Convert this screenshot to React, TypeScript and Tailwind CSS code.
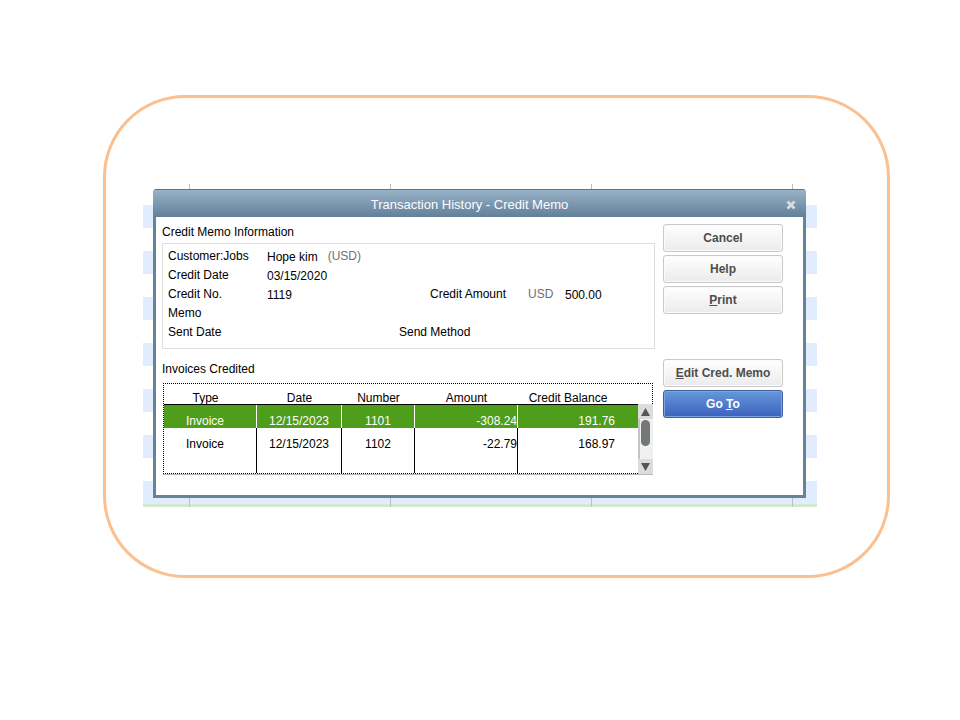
import clsx from "clsx";
import type { ReactNode } from "react";

const invoices = [
  { type: "Invoice", date: "12/15/2023", number: "1101", amount: "-308.24", balance: "191.76" },
  { type: "Invoice", date: "12/15/2023", number: "1102", amount: "-22.79", balance: "168.97" },
];

function DialogButton({ children, primary = false }: { children: ReactNode; primary?: boolean }) {
  return (
    <button
      type="button"
      className={clsx(
        "h-7 w-full rounded-[3px] border text-xs font-bold",
        primary
          ? "border-[#3f5f9f] bg-linear-to-b from-[#6797da] to-[#3c62be] text-white shadow-[inset_0_0_0_1px_#7ba3e0]"
          : "border-[#c9c9c9] bg-linear-to-b from-white to-[#ebebeb] text-[#4d4d4d] shadow-[inset_0_0_0_1px_#fafafa]",
      )}
    >
      {children}
    </button>
  );
}

function Key({ children }: { children: string }) {
  return <span className="underline decoration-1 underline-offset-1">{children}</span>;
}

function MemoInformation() {
  return (
    <section>
      <h2 className="leading-4">Credit Memo Information</h2>
      <dl className="mt-[3px] grid h-[106px] auto-rows-[19px] grid-cols-[99px_132px_31px_98px_37px_1fr] content-start border border-[#dedede] pt-[3px] pl-[5px] leading-[19px]">
        <dt className="col-start-1">Customer:Jobs</dt>
        <dd className="flex gap-[10px]">
          <span className="pt-px">Hope kim</span>
          <span className="text-[#707070]">(USD)</span>
        </dd>
        <dt className="col-start-1">Credit Date</dt>
        <dd className="pt-px">03/15/2020</dd>
        <dt className="col-start-1">Credit No.</dt>
        <dd className="pt-px">1119</dd>
        <dt className="col-start-4">Credit Amount</dt>
        <dd className="text-[#707070]">USD</dd>
        <dd className="pt-px">500.00</dd>
        <dt className="col-start-1">Memo</dt>
        <dt className="col-start-1">Sent Date</dt>
        <dt className="col-span-2 col-start-3">Send Method</dt>
      </dl>
    </section>
  );
}

function ScrollBar() {
  return (
    <div className="flex flex-1 flex-col border-b border-[#b8b8b8] bg-[#dcdcdc]">
      <button type="button" aria-label="Scroll up" className="flex h-[15px] items-center justify-center">
        <svg viewBox="0 0 9 8" className="h-2 w-[9px]" aria-hidden>
          <path d="M4.5 0 9 8H0z" fill="#555" />
        </svg>
      </button>
      <div className="flex-1 border-l-2 border-[#c4c4c4] bg-[#f0f0f0] pt-px pl-px">
        <div className="h-[26px] w-[9px] rounded-full bg-[#737877]" />
      </div>
      <button type="button" aria-label="Scroll down" className="flex h-[15px] items-center justify-center">
        <svg viewBox="0 0 9 8" className="h-2 w-[9px]" aria-hidden>
          <path d="M0 0h9L4.5 8z" fill="#555" />
        </svg>
      </button>
    </div>
  );
}

function InvoicesCredited() {
  return (
    <section className="mt-3">
      <h2 id="invoices-credited" className="leading-4">
        Invoices Credited
      </h2>
      <div className="mt-[6px] mr-[2px] ml-px grid grid-cols-[1fr_15px]">
        <div className="border-b border-[#b8b8b8]">
          <div className="border border-r-0 border-dotted border-black">
            <table
              aria-labelledby="invoices-credited"
              className="w-full table-fixed border-separate border-spacing-0 text-center leading-[14px] [&_td]:p-0 [&_td]:align-bottom [&_th]:border-b [&_th]:border-black [&_th]:p-0 [&_th]:align-bottom [&_th]:leading-3 [&_th]:font-normal"
            >
              <colgroup>
                <col className="w-[93px]" />
                <col className="w-[85px]" />
                <col className="w-[73px]" />
                <col className="w-[103px]" />
                <col />
              </colgroup>
              <thead>
                <tr className="h-[21px]">
                  <th><div className="pr-[10px]">Type</div></th>
                  <th>Date</th>
                  <th>Number</th>
                  <th>Amount</th>
                  <th><div className="pr-[20px]">Credit Balance</div></th>
                </tr>
              </thead>
              <tbody>
                {invoices.map((invoice, i) => {
                  const line = i === 0 ? "border-r border-white" : "border-r border-black";
                  return (
                    <tr key={invoice.number} className={clsx("h-[23px]", i === 0 && "bg-[#4e9d1b] text-white")}>
                      <td className={line}><div className="pr-[10px]">{invoice.type}</div></td>
                      <td className={line}>{invoice.date}</td>
                      <td className={line}>{invoice.number}</td>
                      <td className={clsx(line, "text-right")}>{invoice.amount}</td>
                      <td><div className="pr-[23px] text-right">{invoice.balance}</div></td>
                    </tr>
                  );
                })}
                <tr className="h-[22px]">
                  <td className="border-r border-black" />
                  <td className="border-r border-black" />
                  <td className="border-r border-black" />
                  <td className="border-r border-black" />
                  <td />
                </tr>
              </tbody>
            </table>
          </div>
        </div>
        <div className="flex flex-col">
          <div className="h-[21px] border-t border-r border-dotted border-black" />
          <ScrollBar />
        </div>
      </div>
    </section>
  );
}

function HistoryDialog() {
  return (
    <div
      role="dialog"
      aria-labelledby="dialog-title"
      className="relative overflow-hidden rounded-t-[4px] bg-[#66839a] text-xs text-black"
    >
      <header className="flex h-7 items-center border-t border-[#5c7485] bg-linear-to-b from-[#98b3c8] to-[#63809a] pr-[10px] text-[#fdfdfd]">
        <h1 id="dialog-title" className="flex-1 pt-[2px] text-center text-[13px]">
          Transaction History - Credit Memo
        </h1>
        <button type="button" aria-label="Close" className="pt-[2px]">
          <svg viewBox="0 0 10 10" className="size-[10px]" aria-hidden>
            <path d="M1.5 1.5l7 7M8.5 1.5l-7 7" stroke="#dbdbdb" strokeWidth="2.8" />
          </svg>
        </button>
      </header>
      <div className="mx-[3px] mb-[3px] flex gap-2 bg-white pt-[7px] pr-5 pb-5 pl-[6px]">
        <div className="min-w-0 flex-1">
          <MemoInformation />
          <InvoicesCredited />
        </div>
        <div className="flex w-[120px] flex-col gap-[45px]">
          <div className="flex flex-col gap-[3px]">
            <DialogButton>Cancel</DialogButton>
            <DialogButton>Help</DialogButton>
            <DialogButton>
              <Key>P</Key>rint
            </DialogButton>
          </div>
          <div className="flex flex-col gap-[3px]">
            <DialogButton>
              <Key>E</Key>dit Cred. Memo
            </DialogButton>
            <DialogButton primary>
              Go <Key>T</Key>o
            </DialogButton>
          </div>
        </div>
      </div>
    </div>
  );
}

export default function App() {
  return (
    <main className="min-h-screen bg-white pt-[95px] pr-[70px] pb-10 pl-[103px] font-['Liberation_Sans',Arial,sans-serif]">
      <div className="rounded-[82px] border-[3px] border-[#fbc08f] pt-[86px] pr-[70px] pb-[68px] pl-[37px]">
        {/* ledger rows and column rules show around the dialog's edges */}
        <div className="relative pt-[5px] pr-[11px] pb-[9px] pl-[10px]">
          <div className="absolute inset-x-0 top-[21px] bottom-0 border-b-[3px] border-[#d3ead0] bg-[repeating-linear-gradient(#e1edff_0_23px,#fff_23px_46px)] bg-clip-padding" />
          <div className="absolute inset-0 bg-[repeating-linear-gradient(to_right,transparent_0_46px,#bdbdbd_46px_47px,transparent_47px_201px)]" />
          <HistoryDialog />
        </div>
      </div>
    </main>
  );
}
